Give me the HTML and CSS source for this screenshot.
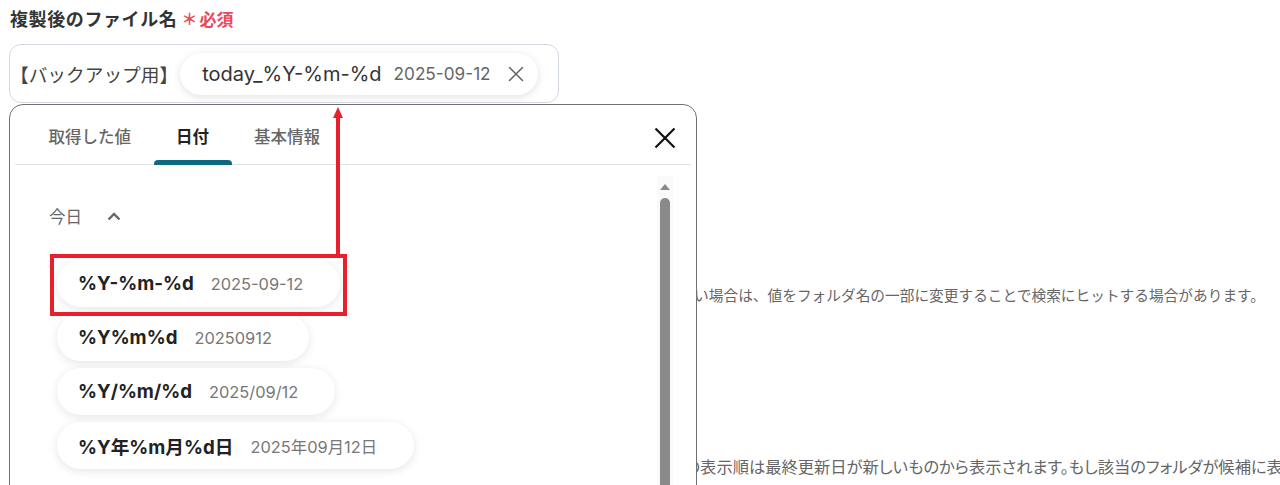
FILE: index.html
```html
<!DOCTYPE html>
<html lang="ja">
<head>
<meta charset="utf-8">
<title>複製後のファイル名</title>
<link rel="stylesheet" href="styles.css">
</head>
<body>
<div class="page">
  <div class="field-label">
    <span class="label-text">複製後のファイル名</span>
    <span class="required"><span class="asterisk">＊</span>必須</span>
  </div>

  <div class="input-box">
    <span class="prefix">【バックアップ用】</span>
    <span class="token">
      <span class="token-name">today_%Y-%m-%d</span>
      <span class="token-value">2025-09-12</span>
      <svg class="token-remove" width="16" height="16" viewBox="0 0 16 16"><path d="M1.5 1.5 L14.5 14.5 M14.5 1.5 L1.5 14.5" stroke="#666" stroke-width="1.6" fill="none" stroke-linecap="round"/></svg>
    </span>
  </div>

  <p class="note note-1">候補に表示されない場合は、値をフォルダ名の一部に変更することで検索にヒットする場合があります。</p>
  <p class="note note-2">フォルダの表示順は最終更新日が新しいものから表示されます。もし該当のフォルダが候補に表示されない場合は再度お試しください。</p>

  <div class="picker">
    <div class="picker-head">
      <div class="tabs">
        <span class="tab">取得した値</span>
        <span class="tab active">日付</span>
        <span class="tab">基本情報</span>
      </div>
      <svg class="close" width="22" height="22" viewBox="0 0 22 22"><path d="M1.5 1.5 L20.5 20.5 M20.5 1.5 L1.5 20.5" stroke="#111" stroke-width="2.2" fill="none"/></svg>
    </div>
    <div class="picker-body">
      <div class="list">
        <div class="section-title">
          <span>今日</span>
          <svg width="14" height="9" viewBox="0 0 14 9"><path d="M1.5 7.5 L7 2 L12.5 7.5" stroke="#666" stroke-width="2.4" fill="none"/></svg>
        </div>
        <div class="options">
          <div class="option"><span class="opt-name">%Y-%m-%d</span><span class="opt-value">2025-09-12</span></div>
          <div class="option"><span class="opt-name">%Y%m%d</span><span class="opt-value">20250912</span></div>
          <div class="option"><span class="opt-name">%Y/%m/%d</span><span class="opt-value">2025/09/12</span></div>
          <div class="option"><span class="opt-name">%Y年%m月%d日</span><span class="opt-value">2025年09月12日</span></div>
        </div>
      </div>
      <div class="scrollbar">
        <span class="scroll-up"></span>
        <span class="scroll-thumb"></span>
      </div>
    </div>
  </div>

  <div class="highlight"></div>
  <div class="arrow">
    <span class="arrow-head"></span>
    <span class="arrow-line"></span>
  </div>
</div>
</body>
</html>
```

FILE: styles.css
```css
* { box-sizing: border-box; }
html, body { margin: 0; padding: 0; background: #fff; }
body {
  font-family: "Inter", "Noto Sans CJK JP", sans-serif;
  color: #333;
  width: 1280px;
  height: 485px;
  overflow: hidden;
}
.page {
  position: relative;
  padding: 5px 0 0 9px;
  height: 485px;
  overflow: hidden;
}
.field-label {
  display: flex;
  align-items: center;
  gap: 4px;
  height: 26px;
  padding-left: 1px;
}
.label-text {
  font-size: 18px;
  font-weight: 700;
  color: #333;
  letter-spacing: 0.6px;
}
.required {
  font-size: 17px;
  font-weight: 700;
  color: #e8495c;
  display: flex;
  align-items: center;
}
.asterisk { font-size: 16px; margin-right: 2px; }

.input-box {
  margin-top: 13px;
  width: 550px;
  height: 59px;
  border: 1px solid #d3d9e1;
  border-radius: 12px;
  display: flex;
  align-items: center;
  padding-left: 0;
  background: #fff;
}
.prefix {
  font-size: 18.7px;
  color: #444;
  margin-right: 2px;
}
.token {
  display: flex;
  align-items: center;
  height: 42px;
  border-radius: 21px;
  padding: 0 14px 0 22px;
  background: #fff;
  box-shadow: 0 2px 8px rgba(0, 0, 0, 0.12);
}
.token-name { font-size: 20px; color: #333; }
.token-value { font-size: 17.2px; color: #666; margin-left: 12px; }
.token-remove { margin-left: 17px; }

.note {
  margin: 0;
  font-family: "Noto Sans CJK JP", sans-serif;
  font-size: 14.7px;
  color: #666;
  white-space: nowrap;
}
.note-1 { margin-top: 181px; text-align: right; padding-right: 15px; width: 1271px; }
.note-2 {
  margin-top: 149px;
  margin-left: 619px;
  font-size: 16.3px;
  font-feature-settings: "palt";
}

.picker {
  position: absolute;
  left: 9px;
  top: 104px;
  width: 688px;
  height: 420px;
  background: #fff;
  border: 1px solid #707070;
  border-radius: 14px;
}
.picker-head {
  height: 60px;
  margin: 0 5px;
  border-bottom: 1px solid #e2e2e2;
  display: flex;
  justify-content: space-between;
  align-items: flex-start;
}
.tabs {
  display: flex;
  padding-left: 11px;
  height: 59px;
}
.tab {
  position: relative;
  padding: 0 22.5px;
  font-size: 16.5px;
  font-weight: 500;
  color: #666;
  line-height: 64px;
}
.tab.active { color: #222; font-weight: 700; }
.tab.active::after {
  content: "";
  position: absolute;
  left: 0;
  right: 0;
  bottom: -1px;
  height: 5px;
  background: #0f6a80;
  border-radius: 4px 4px 0 0;
}
.close { margin: 22px 15px 0 0; }

.picker-body {
  display: flex;
  justify-content: space-between;
}
.list { padding: 36px 0 0 39px; }
.section-title {
  display: flex;
  align-items: center;
  gap: 25px;
  font-size: 16.5px;
  color: #666;
  height: 30px;
}
.options {
  margin-top: 29px;
  margin-left: 8px;
  display: flex;
  flex-direction: column;
  align-items: flex-start;
  gap: 7px;
}
.option {
  display: flex;
  align-items: center;
  height: 47px;
  border-radius: 24px;
  padding: 0 37px 0 21px;
  background: #fff;
  box-shadow: 0 2px 10px rgba(0, 0, 0, 0.10);
}
.opt-name { font-size: 18.7px; font-weight: 700; color: #222; }
.opt-value { font-size: 16.4px; color: #777; margin-left: 17px; }

.scrollbar {
  margin: 11px 23px 0 0;
  width: 16px;
  height: 320px;
  background: #fafafa;
  display: flex;
  flex-direction: column;
  align-items: center;
}
.scroll-up {
  margin-top: 8px;
  width: 0;
  height: 0;
  border-left: 5px solid transparent;
  border-right: 5px solid transparent;
  border-bottom: 6px solid #8a8a8a;
}
.scroll-thumb {
  margin-top: 8px;
  width: 10px;
  height: 300px;
  border-radius: 5px;
  background: #8a8a8a;
}

.highlight {
  position: absolute;
  left: 50px;
  top: 254px;
  width: 297px;
  height: 62px;
  border: 4px solid #e8202c;
}
.arrow {
  position: absolute;
  left: 332px;
  top: 107px;
  width: 11px;
  display: flex;
  flex-direction: column;
  align-items: center;
}
.arrow-head {
  width: 0;
  height: 0;
  border-left: 5.5px solid transparent;
  border-right: 5.5px solid transparent;
  border-bottom: 11px solid #e8202c;
}
.arrow-line {
  width: 4px;
  height: 137px;
  background: #e8202c;
}
```
